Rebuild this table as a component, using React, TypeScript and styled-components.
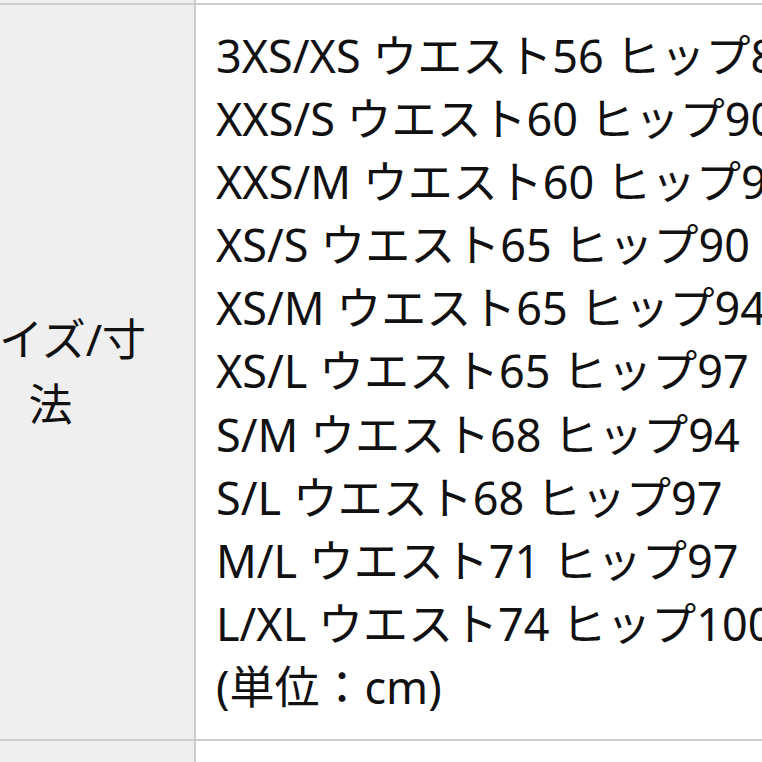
import styled, { createGlobalStyle } from "styled-components";

const GlobalStyle = createGlobalStyle`
  html, body {
    margin: 0;
    padding: 0;
    background: #ffffff;
  }
  body {
    font-family: "Noto Sans", "Noto Sans CJK JP", sans-serif;
    color: #111111;
  }
`;

const Viewport = styled.div`
  width: 762px;
  height: 762px;
  overflow: hidden;
`;

const Table = styled.div`
  display: flex;
  flex-direction: column;
  margin-left: -87px;
  width: 1000px;
`;

const Row = styled.div<{ $height?: number; $first?: boolean }>`
  display: grid;
  grid-template-columns: 283px 1fr;
  border-top: ${(p) => (p.$first ? "none" : "2px solid #cccccc")};
  height: ${(p) => (p.$height ? `${p.$height}px` : "auto")};
`;

const HeadCell = styled.div`
  background: #efefef;
  border-right: 2px solid #cccccc;
  display: flex;
  align-items: center;
  justify-content: center;
  padding: 0 39px 0 33px;
  text-align: center;
  font-size: 44px;
  line-height: 65px;
`;

const DataCell = styled.div`
  background: #ffffff;
  padding: 19px 0 21px 20px;
  font-size: 45px;
  line-height: 63.1px;
  white-space: nowrap;
`;

const Line = styled.div``;

const sizes = [
  "3XS/XS ウエスト56 ヒップ86",
  "XXS/S ウエスト60 ヒップ90",
  "XXS/M ウエスト60 ヒップ94",
  "XS/S ウエスト65 ヒップ90",
  "XS/M ウエスト65 ヒップ94",
  "XS/L ウエスト65 ヒップ97",
  "S/M ウエスト68 ヒップ94",
  "S/L ウエスト68 ヒップ97",
  "M/L ウエスト71 ヒップ97",
  "L/XL ウエスト74 ヒップ100",
  "(単位：cm)",
];

export default function App() {
  return (
    <Viewport>
      <GlobalStyle />
      <Table>
        <Row $first $height={3}>
          <HeadCell />
          <DataCell />
        </Row>
        <Row>
          <HeadCell>サイズ/寸法</HeadCell>
          <DataCell>
            {sizes.map((s) => (
              <Line key={s}>{s}</Line>
            ))}
          </DataCell>
        </Row>
        <Row $height={40}>
          <HeadCell />
          <DataCell />
        </Row>
      </Table>
    </Viewport>
  );
}
